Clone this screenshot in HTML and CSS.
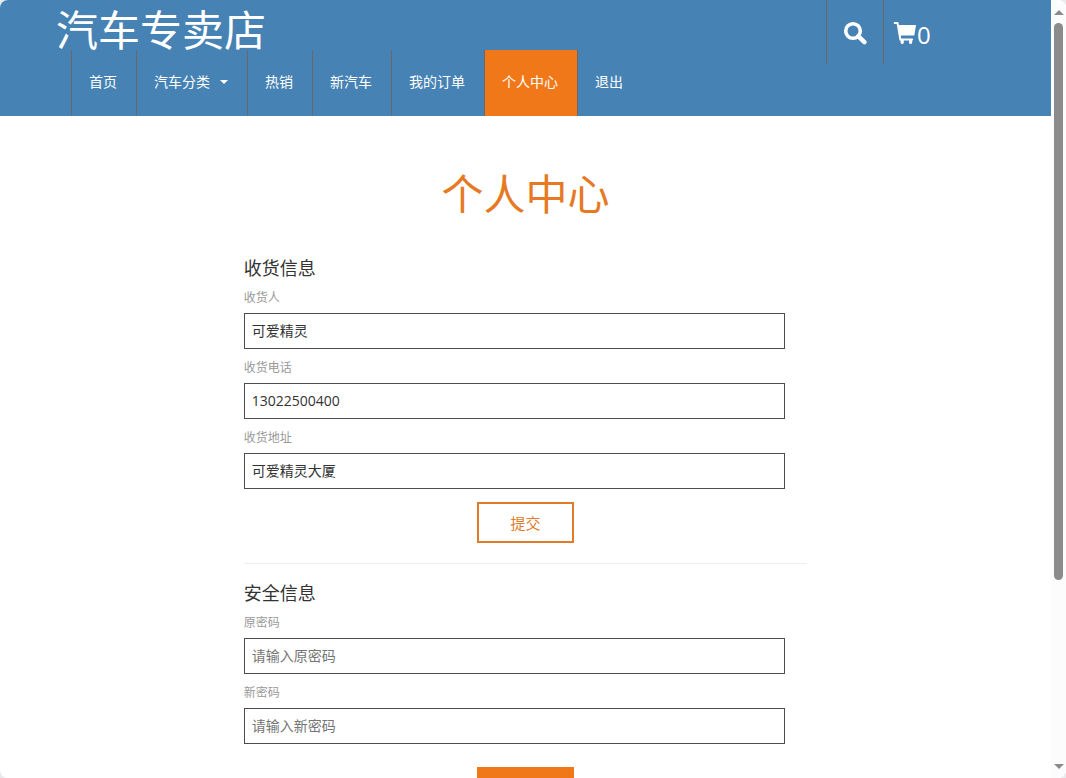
FILE: index.html
```html
<!DOCTYPE html>
<html lang="zh-CN">
<head>
<meta charset="utf-8">
<title>个人中心</title>
<link rel="stylesheet" href="styles.css">
</head>
<body>
<div class="window">
  <div class="page">
    <header class="header">
      <div class="container header-inner">
        <div class="header-main">
          <a class="brand" href="#">汽车专卖店</a>
          <nav class="nav">
            <a class="nav-item" href="#">首页</a>
            <a class="nav-item" href="#">汽车分类<span class="caret"></span></a>
            <a class="nav-item" href="#">热销</a>
            <a class="nav-item" href="#">新汽车</a>
            <a class="nav-item" href="#">我的订单</a>
            <a class="nav-item active" href="#">个人中心</a>
            <a class="nav-item" href="#">退出</a>
          </nav>
        </div>
        <div class="tools">
          <button class="tool tool-search" type="button" aria-label="搜索">
            <svg class="icon" viewBox="0 0 24 24" aria-hidden="true">
              <circle cx="10" cy="10" r="7.3" fill="none" stroke="currentColor" stroke-width="3.6"/>
              <path d="M15.2 15.2 21.4 21.2" fill="none" stroke="currentColor" stroke-width="4.4" stroke-linecap="round"/>
            </svg>
          </button>
          <a class="tool tool-cart" href="#" aria-label="购物车">
            <svg class="icon" viewBox="0 0 24 24" aria-hidden="true">
              <path fill="currentColor" d="M1.6 1H5.2L6 4H23L21.3 14.6H7.8L8.2 17.4H19.2Q20.2 17.5 20.2 18.5 20.2 19.6 19.2 19.6H6.5L3.7 3H1.6Q.7 2.9.7 2 .7 1.1 1.6 1ZM7.6 19H10.8V21.4Q10.6 23 9.2 23T7.6 21.4ZM16 19H19.2V21.4Q19 23 17.6 23T16 21.4Z"/>
            </svg><span class="count">0</span>
          </a>
        </div>
      </div>
    </header>
    <main class="container">
      <h1 class="title">个人中心</h1>
      <div class="account">
        <form class="group">
          <h2 class="heading">收货信息</h2>
          <label class="label" for="name">收货人</label>
          <input class="input" id="name" type="text" value="可爱精灵">
          <label class="label" for="phone">收货电话</label>
          <input class="input" id="phone" type="text" value="13022500400">
          <label class="label" for="address">收货地址</label>
          <input class="input" id="address" type="text" value="可爱精灵大厦">
          <button class="button" type="button">提交</button>
        </form>
        <hr class="rule">
        <form class="group">
          <h2 class="heading">安全信息</h2>
          <label class="label" for="old">原密码</label>
          <input class="input" id="old" type="password" placeholder="请输入原密码">
          <label class="label" for="new">新密码</label>
          <input class="input" id="new" type="password" placeholder="请输入新密码">
          <button class="button filled" type="button" aria-label="提交"></button>
        </form>
      </div>
    </main>
  </div>
  <div class="scrollbar" aria-hidden="true">
    <span class="arrow up"></span>
    <div class="track"><div class="thumb"></div></div>
    <span class="arrow down"></span>
  </div>
</div>
</body>
</html>
```
FILE: styles.css
```css
* {
  box-sizing: border-box;
}

body {
  margin: 0;
  background: #e8eaec;
  color: #333;
  font: 14px/20px "Open Sans", "Noto Sans CJK SC", sans-serif;
}

.window {
  display: flex;
  height: 100vh;
  overflow: hidden;
  border-radius: 8px;
  background: #fff;
}

.page {
  flex: 1;
  min-width: 0;
  overflow: hidden;
}

.container {
  max-width: 969px;
  margin: 0 auto;
  padding: 0 15px;
}

.header {
  background: #4682b4;
}

.header-inner {
  display: flex;
  align-items: flex-start;
}

.header-main {
  flex: 1;
}

.brand {
  display: block;
  height: 50px;
  color: #fff;
  font-size: 42px;
  line-height: 60px;
  text-decoration: none;
}

.nav {
  display: flex;
  padding-left: 15px;
}

.nav-item {
  display: flex;
  align-items: center;
  height: 66px;
  padding: 0 19px 2px 17px;
  border-left: 1px solid #696969;
  color: #fff;
  text-decoration: none;
}

.nav-item.active {
  background: #f07818;
}

.caret {
  margin-left: 10px;
  border: 4px solid transparent;
  border-top-color: #fff;
  border-bottom: 0;
}

.tools {
  display: flex;
  width: 169px;
}

.tool {
  display: flex;
  align-items: center;
  height: 64px;
  padding: 2px 0 0 9px;
  border: 0;
  border-left: 1px solid #696969;
  background: none;
  color: #fff;
  font-size: 24px;
  text-decoration: none;
}

.tool-search {
  width: 57px;
  padding-left: 16px;
}

.icon {
  width: 24px;
  height: 24px;
}

.count {
  padding-top: 4px;
}

.title {
  margin: 0;
  padding: 53px 0 39px;
  color: #e67a24;
  font-size: 42px;
  font-weight: 400;
  line-height: 50px;
  text-align: center;
}

.account {
  width: 60%;
  margin: 0 auto;
}

.group {
  display: flex;
  flex-direction: column;
  align-items: flex-start;
}

.heading {
  margin: 0 0 1px;
  font-size: 18px;
  font-weight: 400;
  line-height: 20px;
}

.label {
  padding: 9px 0 5px;
  color: #999;
  font-size: 12px;
}

.input {
  width: 96%;
  height: 36px;
  padding: 0 7px 2px;
  border: 1px solid #4d4d4d;
  border-radius: 0;
  background: #fff;
  color: #333;
  font: inherit;
}

.input::placeholder {
  color: #757575;
}

.button {
  align-self: center;
  min-width: 97px;
  height: 41px;
  margin-top: 13px;
  border: 2px solid #e07b2c;
  background: #fff;
  color: #e07b2c;
  font: inherit;
  font-size: 15px;
}

.button.filled {
  margin-top: 23px;
  border-color: #f07818;
  background: #f07818;
}

.rule {
  margin: 20px 0 19px;
  border: 0;
  border-top: 1px solid #eee;
}

.scrollbar {
  display: flex;
  flex-direction: column;
  align-items: center;
  width: 15px;
  padding: 10px 0 9px;
  background: #fcfcfc;
}

.track {
  flex: 1;
  width: 9px;
  margin: 8px 0;
}

.thumb {
  height: 76%;
  border-radius: 5px;
  background: #8b8b8b;
}

.arrow {
  border: 5px solid transparent;
}

.up {
  border-top: 0;
  border-bottom-color: #8b8b8b;
}

.down {
  border-bottom: 0;
  border-top-color: #8b8b8b;
}
```
